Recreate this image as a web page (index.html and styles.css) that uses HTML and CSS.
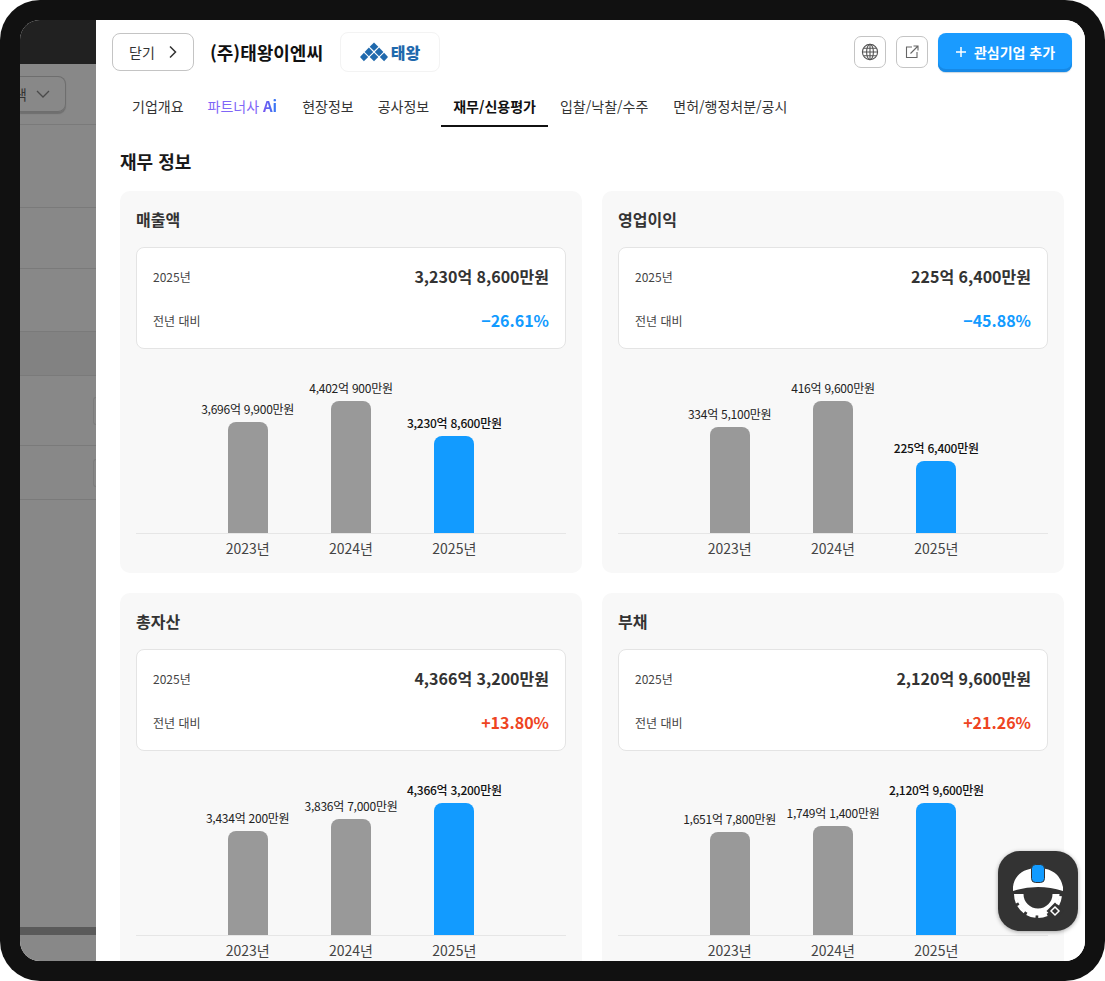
FILE: index.html
```html
<!DOCTYPE html>
<html lang="ko">
<head>
    <meta charset="UTF-8">
    <meta name="viewport" content="width=device-width, initial-scale=1.0">
    <title>재무 정보</title>
    <link rel="stylesheet" href="styles.css">
</head>
<body>
    <div class="device">
        <div class="screen">
            <aside class="backdrop">
                <div class="backdrop-top"></div>
                <div class="backdrop-filter">
                    <div class="select"><span class="select-text">검색</span>
                        <svg width="14" height="8" viewBox="0 0 14 8" fill="none" stroke="#4a4a4a" stroke-width="1.3"><path d="M1 1l6 6 6-6"/></svg>
                    </div>
                </div>
                <div class="backdrop-row row-83"></div>
                <div class="backdrop-row row-61"></div>
                <div class="backdrop-row row-63"></div>
                <div class="backdrop-row row-44 row-dim"></div>
                <div class="backdrop-row row-70"><span class="row-btn"></span></div>
                <div class="backdrop-row row-54"><span class="row-btn"></span></div>
                <div class="backdrop-bar"></div>
            </aside>
            <main class="drawer">
                <header class="drawer-head">
                    <button class="close-btn">닫기
                        <svg width="10" height="14" viewBox="0 0 10 14" fill="none" stroke="#333" stroke-width="1.5"><path d="M2 1.5L7.5 7 2 12.5"/></svg>
                    </button>
                    <h1 class="company">(주)태왕이엔씨</h1>
                    <div class="logo-box">
                        <svg width="28" height="20" viewBox="0 0 28 20" fill="#1f69ad">
                            <path d="M14 0.5l4.3 4.3-4.3 4.3-4.3-4.3z"/>
                            <path d="M8.9 5.6l4.3 4.3-4.3 4.3-4.3-4.3z"/>
                            <path d="M19.1 5.6l4.3 4.3-4.3 4.3-4.3-4.3z"/>
                            <path d="M14 10.7l4.3 4.3-4.3 4.3-4.3-4.3z"/>
                            <path d="M3.9 10.7l4.3 4.3-4.3 4.3L0 15z"/>
                            <path d="M24.1 10.7L28 15l-3.9 4.3-4.3-4.3z"/>
                        </svg>
                        <span class="logo-text">태왕</span>
                    </div>
                    <div class="head-actions">
                        <button class="icon-btn">
                            <svg width="18" height="18" viewBox="0 0 18 18" fill="none" stroke="#555" stroke-width="1.1">
                                <circle cx="9" cy="9" r="7.6"/>
                                <ellipse cx="9" cy="9" rx="3.4" ry="7.6"/>
                                <path d="M9 1.4v15.2M1.4 9h15.2M2.5 5.3h13M2.5 12.7h13"/>
                            </svg>
                        </button>
                        <button class="icon-btn">
                            <svg width="14" height="14" viewBox="0 0 14 14" fill="none" stroke="#666" stroke-width="1.1">
                                <path d="M7 2H1.5v10.5H12V7"/>
                                <path d="M5.5 8.5L12.5 1.5M8.5 1H13V5.5"/>
                            </svg>
                        </button>
                        <button class="add-btn">
                            <svg width="12" height="12" viewBox="0 0 12 12" stroke="#fff" stroke-width="1.5"><path d="M6 1v10M1 6h10"/></svg>
                            관심기업 추가
                        </button>
                    </div>
                </header>
                <nav class="tabs">
                    <a class="tab">기업개요</a>
                    <a class="tab tab-ai">파트너사 <b>Ai</b></a>
                    <a class="tab">현장정보</a>
                    <a class="tab">공사정보</a>
                    <a class="tab active">재무/신용평가</a>
                    <a class="tab">입찰/낙찰/수주</a>
                    <a class="tab tab-last">면허/행정처분/공시</a>
                </nav>
                <section class="content">
                    <h2 class="section-title">재무 정보</h2>
                    <div class="card-grid">
                        <article class="card">
                            <h3 class="card-title">매출액</h3>
                            <div class="summary">
                                <div class="summary-row"><span>2025년</span><strong>3,230억 8,600만원</strong></div>
                                <div class="summary-row"><span>전년 대비</span><strong class="down">−26.61%</strong></div>
                            </div>
                            <div class="plot">
                                <div class="col"><span class="col-label">3,696억 9,900만원</span><div class="bar" style="height:111px"></div></div>
                                <div class="col"><span class="col-label">4,402억 900만원</span><div class="bar" style="height:132px"></div></div>
                                <div class="col current"><span class="col-label">3,230억 8,600만원</span><div class="bar" style="height:97px"></div></div>
                            </div>
                            <div class="years"><span>2023년</span><span>2024년</span><span>2025년</span></div>
                        </article>
                        <article class="card">
                            <h3 class="card-title">영업이익</h3>
                            <div class="summary">
                                <div class="summary-row"><span>2025년</span><strong>225억 6,400만원</strong></div>
                                <div class="summary-row"><span>전년 대비</span><strong class="down">−45.88%</strong></div>
                            </div>
                            <div class="plot">
                                <div class="col"><span class="col-label">334억 5,100만원</span><div class="bar" style="height:106px"></div></div>
                                <div class="col"><span class="col-label">416억 9,600만원</span><div class="bar" style="height:132px"></div></div>
                                <div class="col current"><span class="col-label">225억 6,400만원</span><div class="bar" style="height:72px"></div></div>
                            </div>
                            <div class="years"><span>2023년</span><span>2024년</span><span>2025년</span></div>
                        </article>
                        <article class="card">
                            <h3 class="card-title">총자산</h3>
                            <div class="summary">
                                <div class="summary-row"><span>2025년</span><strong>4,366억 3,200만원</strong></div>
                                <div class="summary-row"><span>전년 대비</span><strong class="up">+13.80%</strong></div>
                            </div>
                            <div class="plot">
                                <div class="col"><span class="col-label">3,434억 200만원</span><div class="bar" style="height:104px"></div></div>
                                <div class="col"><span class="col-label">3,836억 7,000만원</span><div class="bar" style="height:116px"></div></div>
                                <div class="col current"><span class="col-label">4,366억 3,200만원</span><div class="bar" style="height:132px"></div></div>
                            </div>
                            <div class="years"><span>2023년</span><span>2024년</span><span>2025년</span></div>
                        </article>
                        <article class="card">
                            <h3 class="card-title">부채</h3>
                            <div class="summary">
                                <div class="summary-row"><span>2025년</span><strong>2,120억 9,600만원</strong></div>
                                <div class="summary-row"><span>전년 대비</span><strong class="up">+21.26%</strong></div>
                            </div>
                            <div class="plot">
                                <div class="col"><span class="col-label">1,651억 7,800만원</span><div class="bar" style="height:103px"></div></div>
                                <div class="col"><span class="col-label">1,749억 1,400만원</span><div class="bar" style="height:109px"></div></div>
                                <div class="col current"><span class="col-label">2,120억 9,600만원</span><div class="bar" style="height:132px"></div></div>
                            </div>
                            <div class="years"><span>2023년</span><span>2024년</span><span>2025년</span></div>
                        </article>
                    </div>
                </section>
            </main>
        </div>
        <button class="helper-fab">
            <svg width="80" height="80" viewBox="0 0 80 80">
                <path d="M15 36C16 26 24 17 40 17C56 17 63 26 65 36V40Q40 32 15 40z" fill="#fff"/>
                <path d="M22 43A18 18 0 0 0 58 43" fill="none" stroke="#fff" stroke-width="7"/>
                <path d="M17.5 43A22.5 22.5 0 0 0 62.5 43" fill="none" stroke="#fff" stroke-width="3" stroke-dasharray="9 2.8"/>
                <path d="M57 51.5l8.500 8.500-8.500 8.500-8.500-8.500z" fill="#333"/>
                <path d="M57 56l4 4-4 4-4-4z" fill="none" stroke="#fff" stroke-width="1.5"/>
                <rect x="33.5" y="13.5" width="13" height="18" rx="4" fill="#129bff" stroke="#333" stroke-width="1"/>
            </svg>
        </button>
    </div>
</body>
</html>
```
FILE: styles.css
```css
html, body {
    margin: 0;
    padding: 0;
    background-color: #ffffff;
    font-family: "Noto Sans CJK KR", "Noto Sans", sans-serif;
    color: #222222;
}
body {
    width: 1105px;
    height: 981px;
    overflow: hidden;
}
button {
    font-family: inherit;
    cursor: pointer;
}
h1, h2, h3 {
    margin: 0;
}
.device {
    position: relative;
    box-sizing: border-box;
    width: 1105px;
    height: 981px;
    padding: 20px;
    background-color: #111111;
    border-radius: 40px;
}
.screen {
    display: flex;
    height: 941px;
    overflow: hidden;
    border-radius: 20px;
    background-color: #ffffff;
}

/* dimmed page behind the drawer */
.backdrop {
    display: flex;
    flex-direction: column;
    width: 76px;
    flex-shrink: 0;
    background-color: #888888;
    overflow: hidden;
}
.backdrop-top {
    height: 44px;
    flex-shrink: 0;
    background-color: #212121;
}
.backdrop-filter {
    box-sizing: border-box;
    height: 61px;
    flex-shrink: 0;
    padding-top: 12px;
    border-bottom: 1px solid #7a7a7a;
}
.select {
    box-sizing: border-box;
    display: flex;
    align-items: center;
    justify-content: flex-end;
    gap: 9px;
    width: 46px;
    height: 36px;
    padding-right: 15px;
    border: 1px solid #6e6e6e;
    border-left: none;
    border-radius: 0 8px 8px 0;
    box-shadow: 0 2px 1px #6f6f6f;
    overflow: hidden;
}
.select svg {
    flex-shrink: 0;
}
.select-text {
    flex-shrink: 0;
    font-size: 14px;
    color: #333333;
}
.backdrop-row {
    box-sizing: border-box;
    display: flex;
    align-items: center;
    justify-content: flex-end;
    flex-shrink: 0;
    border-bottom: 1px solid #7a7a7a;
}
.row-83 { height: 83px; }
.row-61 { height: 61px; }
.row-63 { height: 63px; }
.row-44 { height: 44px; }
.row-70 { height: 70px; }
.row-54 { height: 54px; }
.row-dim {
    background-color: #828282;
}
.row-btn {
    width: 2px;
    height: 26px;
    border: 1px solid #7d7d7d;
    border-right: none;
    border-radius: 4px 0 0 4px;
}
.backdrop-bar {
    flex-shrink: 0;
    height: 8px;
    margin-top: 427px;
    background-color: #5a5a5a;
}

/* drawer */
.drawer {
    flex: 1;
    min-width: 0;
    background-color: #ffffff;
    overflow: hidden;
}
.drawer-head {
    display: flex;
    align-items: center;
    padding: 12px 13px 0 16px;
}
.close-btn {
    display: flex;
    align-items: center;
    gap: 13px;
    box-sizing: border-box;
    width: 82px;
    height: 38px;
    padding: 0 0 0 16px;
    border: 1px solid #c4c4c4;
    border-radius: 8px;
    background-color: #ffffff;
    font-size: 14px;
    color: #333333;
}
.company {
    margin-left: 16px;
    font-size: 18px;
    font-weight: 700;
    line-height: 40px;
    color: #111111;
}
.logo-box {
    display: flex;
    align-items: center;
    justify-content: center;
    gap: 3px;
    box-sizing: border-box;
    width: 100px;
    height: 40px;
    margin-left: 17px;
    border: 1px solid #f3f3f3;
    border-radius: 8px;
}
.logo-text {
    font-size: 16px;
    font-weight: 900;
    color: #1f69ad;
}
.head-actions {
    display: flex;
    align-items: center;
    margin-left: auto;
}
.icon-btn {
    display: flex;
    align-items: center;
    justify-content: center;
    box-sizing: border-box;
    width: 32px;
    height: 32px;
    margin-right: 10px;
    padding: 0;
    border: 1px solid #c4c4c4;
    border-radius: 7px;
    background-color: #ffffff;
}
.add-btn {
    display: flex;
    align-items: center;
    justify-content: center;
    gap: 7px;
    box-sizing: border-box;
    width: 134px;
    height: 39px;
    padding: 0;
    border: none;
    border-radius: 8px;
    background-color: #1a9bff;
    box-shadow: inset 0 -3px 0 #1689e6, 0 1px 1px #c9d6e0;
    font-size: 14px;
    font-weight: 700;
    color: #ffffff;
}
.tabs {
    display: flex;
    margin-top: 16px;
    padding-left: 24px;
}
.tab {
    box-sizing: border-box;
    height: 39px;
    padding: 8px 12px 0;
    font-size: 14px;
    line-height: 20px;
    color: #333333;
}
.tab-ai {
    margin-right: 1px;
    color: #7f66f7;
}
.tab-ai b {
    font-size: 15px;
    background: linear-gradient(90deg, #7a55f0, #2f7bf5);
    -webkit-background-clip: text;
    background-clip: text;
    color: transparent;
}
.tab.active {
    border-bottom: 2px solid #111111;
    font-weight: 700;
    color: #111111;
}
.tab-last {
    margin-left: 1px;
}
.content {
    padding: 20px 21px 0 24px;
}
.section-title {
    margin-bottom: 16px;
    font-size: 18px;
    font-weight: 700;
    line-height: 28px;
    color: #1a1a1a;
}
.card-grid {
    display: grid;
    grid-template-columns: 462px 462px;
    gap: 20px;
}
.card {
    padding: 16px 16px 11px;
    border-radius: 10px;
    background-color: #f8f8f8;
}
.card-title {
    margin-bottom: 16px;
    font-size: 16px;
    font-weight: 700;
    line-height: 24px;
    color: #333333;
}
.summary {
    display: flex;
    flex-direction: column;
    gap: 20px;
    padding: 16px;
    border: 1px solid #e4e4e4;
    border-radius: 8px;
    background-color: #ffffff;
}
.summary-row {
    display: flex;
    align-items: center;
    justify-content: space-between;
    height: 24px;
    font-size: 12px;
    color: #444444;
}
.summary-row strong {
    font-size: 16px;
    font-weight: 700;
    color: #333333;
}
.summary-row strong.down {
    color: #129bff;
}
.summary-row strong.up {
    color: #ee4422;
}
.plot {
    display: grid;
    grid-template-columns: repeat(3, 103.33px);
    justify-content: center;
    align-items: end;
    height: 184px;
    border-bottom: 1px solid #e6e6e6;
}
.col {
    display: flex;
    flex-direction: column;
    align-items: center;
}
.col-label {
    margin-bottom: 4px;
    font-size: 12px;
    letter-spacing: -0.25px;
    line-height: 18px;
    white-space: nowrap;
    color: #222222;
}
.bar {
    width: 40px;
    border-radius: 8px 8px 0 0;
    background-color: #999999;
}
.current .col-label {
    font-weight: 500;
    color: #111111;
}
.current .bar {
    background-color: #129bff;
}
.years {
    display: grid;
    grid-template-columns: repeat(3, 103.33px);
    justify-content: center;
    font-size: 14px;
    line-height: 28px;
    text-align: center;
    color: #444444;
}

/* floating helper button */
.helper-fab {
    position: absolute;
    left: 998px;
    top: 851px;
    width: 80px;
    height: 80px;
    padding: 0;
    border: none;
    border-radius: 22px;
    background-color: #333333;
    box-shadow: 0 1px 4px rgba(0, 0, 0, 0.35);
}
.helper-fab svg {
    display: block;
}
```
